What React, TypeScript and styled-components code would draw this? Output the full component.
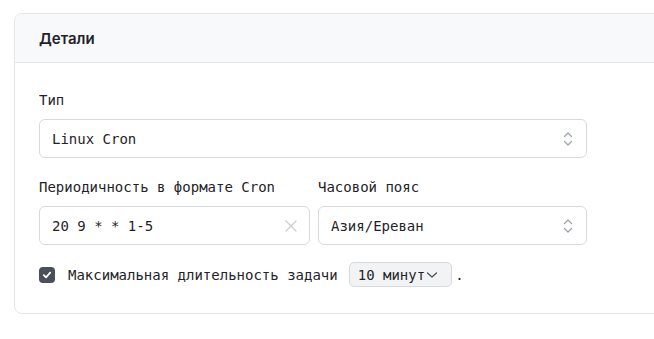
import styled, { createGlobalStyle } from 'styled-components';

const GlobalStyle = createGlobalStyle`
  body {
    margin: 0;
    background: #ffffff;
    overflow: hidden;
    font-family: 'DejaVu Sans Mono', 'Liberation Mono', monospace;
    color: #1f2329;
  }
`;

const UpDown = () => (
  <svg width="12" height="16" viewBox="0 0 12 16" fill="none">
    <path d="M2.5 5.5L6 2l3.5 3.5" stroke="#9aa0ab" strokeWidth="1.2" strokeLinecap="round" strokeLinejoin="round" />
    <path d="M2.5 10.5L6 14l3.5-3.5" stroke="#9aa0ab" strokeWidth="1.2" strokeLinecap="round" strokeLinejoin="round" />
  </svg>
);

const Cross = () => (
  <svg width="12" height="12" viewBox="0 0 12 12" fill="none">
    <path d="M1 1l10 10M11 1L1 11" stroke="#c8ccd3" strokeWidth="1.2" strokeLinecap="round" />
  </svg>
);

const Check = () => (
  <svg width="10" height="10" viewBox="0 0 10 10" fill="none">
    <path d="M1.8 5.2l2.2 2.1 4.2-4.6" stroke="#ffffff" strokeWidth="1.8" strokeLinecap="round" strokeLinejoin="round" />
  </svg>
);

const ChevronDown = () => (
  <svg width="12" height="8" viewBox="0 0 12 8" fill="none">
    <path d="M1.5 2l4.5 4 4.5-4" stroke="#4b5160" strokeWidth="1.3" strokeLinecap="round" strokeLinejoin="round" />
  </svg>
);

const App = () => {
  return (
    <>
      <GlobalStyle />
      <Page>
        <Card>
          <Header>Детали</Header>
          <Body>
            <Field>
              <Label>Тип</Label>
              <Control>
                <Value>Linux Cron</Value>
                <UpDown />
              </Control>
            </Field>
            <Row>
              <Field>
                <Label>Периодичность в формате Cron</Label>
                <Control>
                  <Value>20 9 * * 1-5</Value>
                  <Cross />
                </Control>
              </Field>
              <Field>
                <Label>Часовой пояс</Label>
                <Control>
                  <Value>Азия/Ереван</Value>
                  <UpDown />
                </Control>
              </Field>
            </Row>
            <CheckRow>
              <Box>
                <Check />
              </Box>
              <CheckText>Максимальная длительность задачи</CheckText>
              <Pill>
                10 минут
                <ChevronDown />
              </Pill>
              <span>.</span>
            </CheckRow>
          </Body>
        </Card>
      </Page>
    </>
  );
};

export default App;

const Page = styled.div`
  padding: 13px 0 0 14px;
  overflow: hidden;
`;

const Card = styled.section`
  width: 680px;
  border: 1px solid #e4e6ea;
  border-radius: 8px;
  overflow: hidden;
  background: #ffffff;
`;

const Header = styled.div`
  height: 48px;
  display: flex;
  align-items: center;
  padding: 0 24px;
  background: #f8f9fb;
  border-bottom: 1px solid #e4e6ea;
  font-family: Inter, 'Noto Sans', sans-serif;
  font-size: 15px;
  font-weight: 600;
  color: #1f2329;
`;

const Body = styled.div`
  width: 548px;
  padding: 27px 24px 26px;
  display: flex;
  flex-direction: column;
  gap: 19px;
`;

const Row = styled.div`
  display: grid;
  grid-template-columns: 271px 1fr;
  gap: 8px;
`;

const Field = styled.div`
  display: flex;
  flex-direction: column;
  gap: 9px;
`;

const Label = styled.div`
  font-size: 14px;
  line-height: 20px;
  color: #1f2329;
`;

const Control = styled.div`
  height: 37px;
  border: 1px solid #d6d9de;
  border-radius: 6px;
  display: flex;
  align-items: center;
  justify-content: space-between;
  padding: 0 12px 0 12px;
  background: #ffffff;
`;

const Value = styled.span`
  font-size: 14px;
  color: #1f2329;
`;

const CheckRow = styled.div`
  display: flex;
  align-items: center;
  margin-top: -2px;
  font-size: 14px;
`;

const Box = styled.span`
  width: 16px;
  height: 16px;
  border-radius: 4px;
  background: #4a4f5c;
  display: flex;
  align-items: center;
  justify-content: center;
  margin-right: 13px;
`;

const CheckText = styled.span`
  margin-right: 11px;
`;

const Pill = styled.span`
  height: 23px;
  display: flex;
  align-items: center;
  gap: 1px;
  padding: 0 13px 0 8px;
  border: 1px solid #d6d9de;
  border-radius: 5px;
  background: #f2f3f5;
  margin-right: 3px;
`;
